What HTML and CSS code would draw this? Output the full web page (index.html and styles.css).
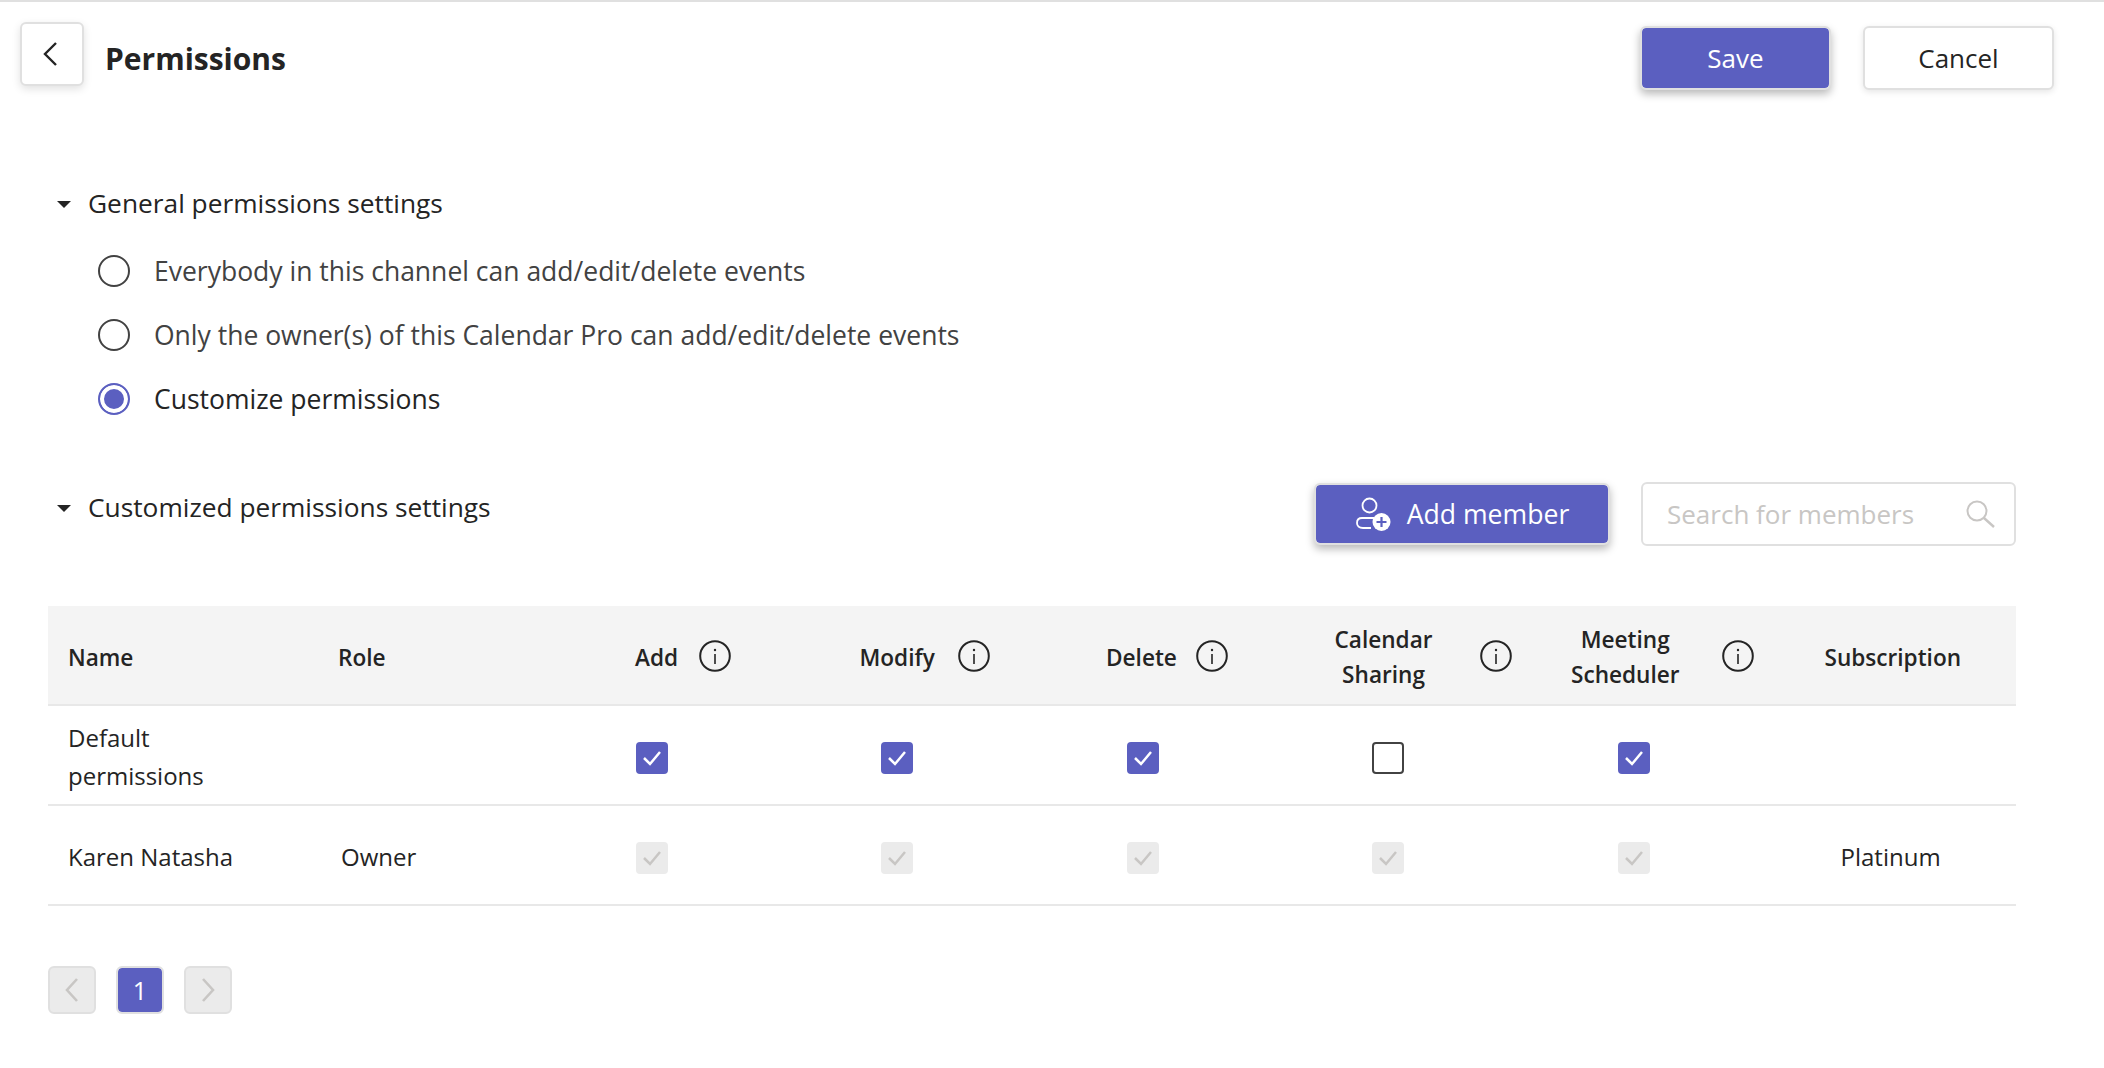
FILE: index.html
```html
<!DOCTYPE html>
<html>
<head>
<title>Permissions</title>
<link rel="stylesheet" href="styles.css">
</head>
<body>

<header class="topbar">
  <button class="back-btn" type="button" aria-label="Back">
    <svg width="16" height="26" viewBox="0 0 16 26"><path d="M14 2 3 13l11 11" fill="none" stroke="#242424" stroke-width="2.4"/></svg>
  </button>
  <h1 class="page-title">Permissions</h1>
  <div class="top-actions">
    <button class="btn btn-primary" type="button">Save</button>
    <button class="btn btn-default" type="button">Cancel</button>
  </div>
</header>

<main class="content">
  <section class="general">
    <h2 class="section-title"><span class="caret"></span>General permissions settings</h2>
    <ul class="radio-list">
      <li class="radio-row"><span class="radio"></span>Everybody in this channel can add/edit/delete events</li>
      <li class="radio-row"><span class="radio"></span>Only the owner(s) of this Calendar Pro can add/edit/delete events</li>
      <li class="radio-row radio-row-on"><span class="radio radio-on"></span>Customize permissions</li>
    </ul>
  </section>

  <section class="custom">
    <div class="custom-head">
      <h2 class="section-title"><span class="caret"></span>Customized permissions settings</h2>
      <button class="btn btn-primary btn-add" type="button">
        <svg width="36" height="36" viewBox="0 0 36 36">
          <circle cx="14.5" cy="9.5" r="7" fill="none" stroke="#fff" stroke-width="1.8"/>
          <path d="M16 32H8c-4 0-6-2-6-5s2-5 5-5h12" fill="none" stroke="#fff" stroke-width="1.8"/>
          <circle cx="26.5" cy="26" r="9" fill="#fff"/>
          <path d="M26.5 21v10M21.5 26h10" stroke="#5b5fc0" stroke-width="2.2"/>
        </svg>
        Add member
      </button>
      <div class="search-box">
        <span class="search-text">Search for members</span>
        <svg width="30" height="28" viewBox="0 0 30 28"><circle cx="11" cy="11" r="9.5" fill="none" stroke="#c8c6c4" stroke-width="2"/><path d="m18 18 10 9" stroke="#c8c6c4" stroke-width="2.4"/></svg>
      </div>
    </div>

    <table class="perm-table">
      <colgroup>
        <col class="col-name"><col class="col-role">
        <col class="col-perm"><col class="col-perm"><col class="col-perm"><col class="col-perm"><col class="col-perm">
        <col class="col-sub">
      </colgroup>
      <thead>
        <tr>
          <th class="cell-name">Name</th>
          <th>Role</th>
          <th><div class="th-inner th-add">Add<svg class="info"><use href="#info-icon"/></svg></div></th>
          <th><div class="th-inner th-modify">Modify<svg class="info"><use href="#info-icon"/></svg></div></th>
          <th><div class="th-inner th-delete">Delete<svg class="info"><use href="#info-icon"/></svg></div></th>
          <th><div class="th-inner th-calendar"><span>Calendar<br>Sharing</span><svg class="info"><use href="#info-icon"/></svg></div></th>
          <th><div class="th-inner th-meeting"><span>Meeting<br>Scheduler</span><svg class="info"><use href="#info-icon"/></svg></div></th>
          <th class="cell-sub">Subscription</th>
        </tr>
      </thead>
      <tbody>
        <tr>
          <td class="cell-name">Default<br>permissions</td>
          <td></td>
          <td class="cell-check"><span class="check check-on"><svg class="tick"><use href="#tick-icon"/></svg></span></td>
          <td class="cell-check"><span class="check check-on"><svg class="tick"><use href="#tick-icon"/></svg></span></td>
          <td class="cell-check"><span class="check check-on"><svg class="tick"><use href="#tick-icon"/></svg></span></td>
          <td class="cell-check"><span class="check"></span></td>
          <td class="cell-check"><span class="check check-on"><svg class="tick"><use href="#tick-icon"/></svg></span></td>
          <td></td>
        </tr>
        <tr>
          <td class="cell-name">Karen Natasha</td>
          <td class="cell-owner">Owner</td>
          <td class="cell-check"><span class="check check-off"><svg class="tick"><use href="#tick-icon"/></svg></span></td>
          <td class="cell-check"><span class="check check-off"><svg class="tick"><use href="#tick-icon"/></svg></span></td>
          <td class="cell-check"><span class="check check-off"><svg class="tick"><use href="#tick-icon"/></svg></span></td>
          <td class="cell-check"><span class="check check-off"><svg class="tick"><use href="#tick-icon"/></svg></span></td>
          <td class="cell-check"><span class="check check-off"><svg class="tick"><use href="#tick-icon"/></svg></span></td>
          <td class="cell-plan">Platinum</td>
        </tr>
      </tbody>
    </table>

    <nav class="pager">
      <span class="page-btn page-off"><svg width="14" height="26" viewBox="0 0 14 26"><path d="M12 2 2 13l10 11" fill="none" stroke="#c8c6c4" stroke-width="2.6"/></svg></span>
      <span class="page-btn page-on">1</span>
      <span class="page-btn page-off"><svg width="14" height="26" viewBox="0 0 14 26"><path d="m2 2 10 11L2 24" fill="none" stroke="#c8c6c4" stroke-width="2.6"/></svg></span>
    </nav>
  </section>
</main>

<svg class="icon-defs" width="0" height="0">
  <symbol id="info-icon" viewBox="0 0 32 32">
    <circle cx="16" cy="16" r="14.8" fill="none" stroke="#242424" stroke-width="2"/>
    <path d="M16 14v10" stroke="#242424" stroke-width="1.6"/>
    <circle cx="16" cy="10" r="1.2" fill="#242424"/>
  </symbol>
  <symbol id="tick-icon" viewBox="0 0 20 18">
    <path d="m2 9 6 6L18 3" fill="none" stroke="currentColor" stroke-width="2.5"/>
  </symbol>
</svg>

</body>
</html>
```

FILE: styles.css
```css
* {
  box-sizing: border-box;
}
body {
  margin: 0;
  background: #fff;
  color: #242424;
  font-family: "Open Sans", "Noto Sans", sans-serif;
  font-size: 25px;
  border-top: 2px solid #e0e0e0;
  height: 1068px;
  overflow: hidden;
}
button {
  font-family: inherit;
  font-size: 26px;
  cursor: pointer;
}

/* top bar */
.topbar {
  display: flex;
  align-items: flex-start;
  padding: 20px 50px 0 20px;
}
.back-btn {
  width: 64px;
  height: 64px;
  padding: 0 4px 0 0;
  display: flex;
  align-items: center;
  justify-content: center;
  background: #fff;
  border: 2px solid #e0e0e0;
  border-radius: 6px;
  box-shadow: 0 3px 8px rgba(0, 0, 0, .12);
}
.page-title {
  margin: 16px 0 0 21px;
  font-size: 30px;
  line-height: 42px;
  font-weight: 700;
}
.top-actions {
  margin: 4px 0 0 auto;
  display: flex;
  gap: 32px;
}
.btn {
  width: 191px;
  height: 64px;
  border-radius: 6px;
  border: 2px solid #e0e0e0;
  background: #fff;
  color: #242424;
}
.btn-primary {
  background: #5b5fc0;
  background-clip: padding-box;
  color: #fff;
  box-shadow: 0 4px 9px rgba(0, 0, 0, .28);
}
.btn-default {
  box-shadow: 0 2px 6px rgba(0, 0, 0, .1);
}

/* sections */
.content {
  padding: 0 88px 0 48px;
}
.general {
  padding-top: 93px;
}
.section-title {
  margin: 0;
  display: flex;
  align-items: center;
  font-size: 26.3px;
  line-height: 40px;
  font-weight: 400;
}
.caret {
  width: 0;
  height: 0;
  margin: 2px 17px 0 9px;
  border-left: 7px solid transparent;
  border-right: 7px solid transparent;
  border-top: 7px solid #242424;
}
.radio-list {
  list-style: none;
  margin: 16px 0 0;
  padding: 0 0 0 50px;
}
.radio-row {
  height: 64px;
  display: flex;
  align-items: center;
  gap: 24px;
  color: #424242;
  font-size: 26.5px;
}
.radio-row-on {
  color: #242424;
}
.radio {
  width: 32px;
  height: 32px;
  border: 2px solid #424242;
  border-radius: 50%;
}
.radio-on {
  border-color: #5b5fc0;
  background: #5b5fc0;
  box-shadow: inset 0 0 0 4px #fff;
}

/* customized block */
.custom {
  padding-top: 51px;
}
.custom-head {
  display: flex;
  align-items: flex-start;
}
.custom-head .section-title {
  flex: 1;
  margin-top: 5px;
}
.btn-add {
  width: 296px;
  height: 62px;
  margin-top: 1px;
  display: flex;
  align-items: center;
  justify-content: center;
  gap: 16px;
  font-size: 26.6px;
}
.search-box {
  width: 375px;
  height: 64px;
  margin-left: 31px;
  padding: 0 18px 0 24px;
  display: flex;
  align-items: center;
  justify-content: space-between;
  border: 2px solid #e0e0e0;
  border-radius: 6px;
  color: #c8c6c4;
  font-size: 26px;
}

/* table */
.perm-table {
  width: 1968px;
  margin-top: 60px;
  border-collapse: collapse;
  table-layout: fixed;
}
.col-name { width: 290px; }
.col-role { width: 191px; }
.col-perm { width: 245.5px; }
.col-sub { width: 259.5px; }
.perm-table tr {
  height: 100px;
  border-bottom: 2px solid #e8e8e8;
}
.perm-table thead tr {
  height: 99px;
  background: #f4f4f4;
}
.perm-table th {
  padding: 4px 0 0;
  text-align: left;
  font-size: 22.6px;
  line-height: 35px;
  font-weight: 600;
}
.perm-table td {
  padding: 4px 0 0;
  font-size: 24px;
  line-height: 38px;
}
.perm-table .cell-name {
  padding-left: 20px;
}
.cell-owner {
  padding-left: 3px !important;
}
.th-inner {
  display: flex;
  align-items: center;
}
.th-inner span {
  text-align: center;
}
.th-inner .info {
  margin-top: -3px;
}
.th-add { padding-left: 106px; gap: 21px; }
.th-modify { padding-left: 85px; gap: 23px; }
.th-delete { padding-left: 86px; gap: 19px; }
.th-calendar { padding-left: 69px; gap: 47px; }
.th-meeting { padding-left: 60px; gap: 42px; }
.info {
  width: 32px;
  height: 32px;
  flex: none;
}
.perm-table .cell-sub {
  padding-left: 68px;
}
.cell-plan {
  padding-left: 84px !important;
}
.cell-check {
  text-align: center;
  padding-top: 0 !important;
}
.check {
  width: 32px;
  height: 32px;
  display: inline-flex;
  align-items: center;
  justify-content: center;
  vertical-align: middle;
  border: 2px solid #424242;
  border-radius: 4px;
}
.check-on {
  border: 0;
  background: #5b5fc0;
  color: #fff;
}
.check-off {
  border: 0;
  background: #ebebeb;
  color: #c8c6c4;
}
.tick {
  width: 20px;
  height: 18px;
}
.icon-defs {
  position: absolute;
}

/* pager */
.pager {
  display: flex;
  gap: 20px;
  margin-top: 60px;
}
.page-btn {
  width: 48px;
  height: 48px;
  display: flex;
  align-items: center;
  justify-content: center;
  border: 2px solid #e0e0e0;
  border-radius: 6px;
  font-size: 25px;
}
.page-off {
  background: #ebebeb;
}
.page-on {
  background: #5b5fc0;
  background-clip: padding-box;
  color: #fff;
}
```
